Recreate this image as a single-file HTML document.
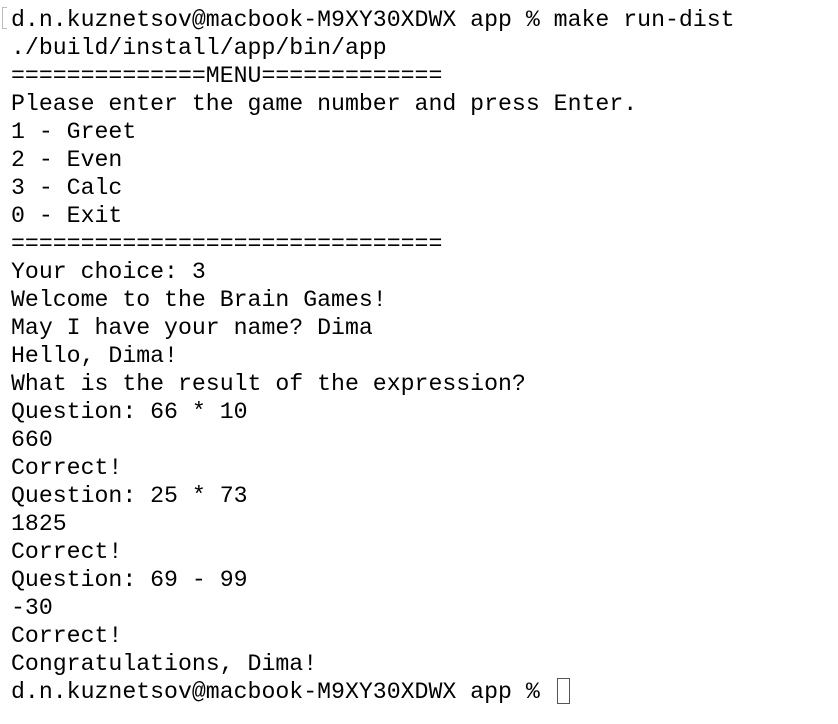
<!DOCTYPE html>
<html><head><meta charset="utf-8"><style>
html,body{margin:0;padding:0;background:#fff;width:838px;height:724px;overflow:hidden}
pre{position:absolute;left:11px;top:6px;margin:0;font-family:"Liberation Mono",monospace;font-size:23.2px;line-height:28px;color:#000;letter-spacing:0}
.br{position:absolute;left:2px;top:7px;width:5px;height:22px;border:1.5px solid #bbb;border-right:none;box-sizing:border-box}
.cur{position:absolute;left:557px;top:678px;width:13px;height:26px;border:1.5px solid #555;box-sizing:border-box}
</style></head><body>
<div class="br"></div>
<pre>d.n.kuznetsov@macbook-M9XY30XDWX app % make run-dist
./build/install/app/bin/app
==============MENU=============
Please enter the game number and press Enter.
1 - Greet
2 - Even
3 - Calc
0 - Exit
===============================
Your choice: 3
Welcome to the Brain Games!
May I have your name? Dima
Hello, Dima!
What is the result of the expression?
Question: 66 * 10
660
Correct!
Question: 25 * 73
1825
Correct!
Question: 69 - 99
-30
Correct!
Congratulations, Dima!
d.n.kuznetsov@macbook-M9XY30XDWX app % </pre>
<div class="cur"></div>
</body></html>
